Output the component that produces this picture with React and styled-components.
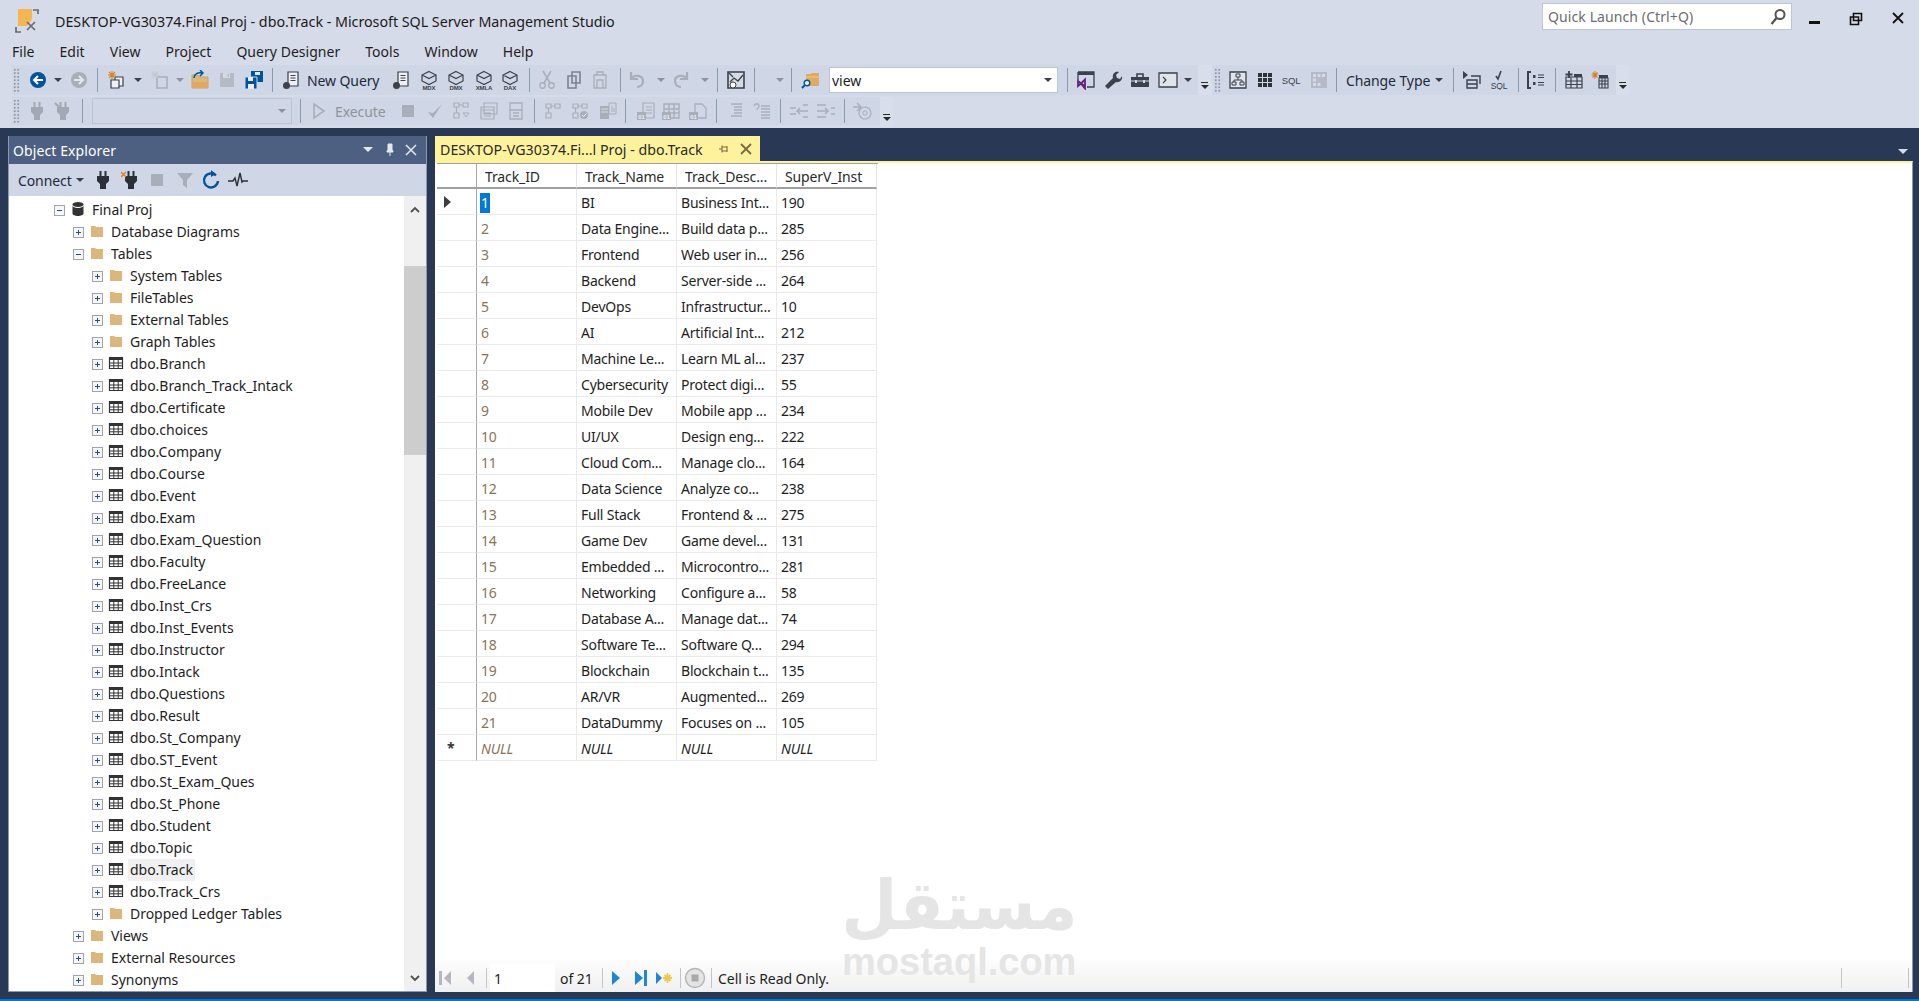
import React from 'react';
import styled, { createGlobalStyle } from 'styled-components';

const FONT = '"Noto Sans", "Open Sans", sans-serif';
const Global = createGlobalStyle`
  html, body { margin: 0; padding: 0; background: #293955; }
  * { box-sizing: border-box; }
  body { font-family: ${FONT}; }
`;

const Shell = styled.div`width:1919px;height:1001px;display:flex;flex-direction:column;overflow:hidden;background:#d6dbe9;font-family:${FONT};color:#1e1e1e;`;
const TitleBar = styled.div`height:38px;display:flex;align-items:flex-start;flex:none;`;
const AppIcon = styled.div`width:24px;height:26px;margin:8px 0 0 15px;flex:none;`;
const TitleText = styled.div`margin:12px 0 0 16px;font-size:14.3px;line-height:20px;letter-spacing:-.03px;color:#1b1b1b;white-space:nowrap;`;
const TitleSpacer = styled.div`flex:1;`;
const QuickLaunch = styled.div`width:250px;height:27px;margin-top:3px;background:#fff;border:1px solid #bcc5d8;display:flex;align-items:center;justify-content:space-between;padding:0 4px 0 5px;font-size:14px;letter-spacing:.1px;color:#6d6d6d;`;
const WinControls = styled.div`display:flex;width:127px;flex:none;padding-left:2px;`;
const WinBtn = styled.div`width:41.6px;height:38px;display:flex;align-items:center;justify-content:center;`;
const MenuBar = styled.div`height:27px;flex:none;display:flex;align-items:center;padding-left:12px;gap:25px;font-size:14px;letter-spacing:.03px;color:#1e1e1e;`;
const Band = styled.div`height:31px;flex:none;display:flex;align-items:flex-start;margin-bottom:${p=>p.$mb||0}px;`;
const Toolbar = styled.div`display:flex;align-items:center;height:${p=>p.$h||30}px;width:${p=>p.$w}px;margin-left:${p=>p.$ml||0}px;background:#cfd6e5;flex:none;`;
const Slot = styled.div`flex:none;width:${p=>p.$w}px;margin-left:${p=>p.$ml}px;height:24px;display:flex;align-items:center;justify-content:${p=>p.$left?'flex-start':'center'};font-size:14px;letter-spacing:-.1px;white-space:nowrap;color:${p=>p.$off?'#8e939c':'#1e2a3c'};`;
const Sep = styled.div`flex:none;width:1px;height:24px;margin-left:${p=>p.$ml}px;background:#8a9bad;`;
const Grip = styled.div`flex:none;width:7px;height:24px;margin-left:${p=>p.$ml}px;background-image:radial-gradient(#8f97a8 .8px,transparent 1px);background-size:3.5px 3.5px;`;
const Caret = styled.div`flex:none;margin-left:${p=>p.$ml}px;width:0;height:0;border-left:4px solid transparent;border-right:4px solid transparent;border-top:4px solid ${p=>p.$off?'#8e939c':'#3a3f4a'};`;
const Overflow = styled.div`flex:none;width:13px;height:30px;background:#d9deeb;display:flex;flex-direction:column;align-items:center;justify-content:flex-end;padding-bottom:6px;gap:2px;`;
const OverLine = styled.div`width:7px;height:1px;background:#2a2a2a;`;
const OverTri = styled.div`width:0;height:0;border-left:4px solid transparent;border-right:4px solid transparent;border-top:4px solid #2a2a2a;`;
const Combo = styled.div`flex:none;margin-left:${p=>p.$ml}px;width:${p=>p.$w}px;height:26px;background:${p=>p.$off?'#cfd6e5':'#fff'};border:1px solid ${p=>p.$off?'#bdc5d4':'#bcc5d8'};display:flex;align-items:center;justify-content:space-between;padding:0 5px 0 2px;font-size:14px;letter-spacing:0;`;

const Workspace = styled.div`flex:1;min-height:0;background:#293955;padding:8px 6px 7px 8px;display:flex;gap:8px;`;
const BottomLine = styled.div`height:2px;background:#007acc;flex:none;`;
const Explorer = styled.div`width:419px;flex:none;display:flex;flex-direction:column;background:#cfd6e5;border:1px solid #8b98ae;border-top:none;`;
const PanelTitle = styled.div`height:28px;flex:none;background:#4d6082;color:#fff;display:flex;align-items:center;padding-left:4px;font-size:14px;letter-spacing:.1px;`;
const PanelTools = styled.div`margin-left:auto;display:flex;align-items:center;padding-right:5px;`;
const PanelBtn = styled.div`width:${p=>p.$w||22}px;display:flex;align-items:center;justify-content:center;`;
const ExplorerBar = styled.div`height:32px;flex:none;display:flex;align-items:center;background:#cfd6e5;font-size:14px;`;
const TreeWrap = styled.div`flex:1;min-height:0;display:flex;background:#fff;overflow:hidden;`;
const TreeList = styled.div`flex:1;padding-top:3px;overflow:hidden;`;
const TreeRow = styled.div`height:22px;display:flex;align-items:center;padding-left:${p=>45+19*p.$d}px;font-size:14px;letter-spacing:-.03px;color:#1e1e1e;white-space:nowrap;`;
const Expander = styled.div`width:11px;height:11px;flex:none;border:1px solid #a0a4ac;background:#f6f6f6;position:relative;
  &::before{content:'';position:absolute;left:2px;right:2px;top:4px;height:1px;background:#2b4a86;}
  ${p=>p.$plus?`&::after{content:'';position:absolute;top:2px;bottom:2px;left:4px;width:1px;background:#2b4a86;}`:''}`;
const NodeIcon = styled.div`width:16px;height:16px;margin:-2px 6px 0 5px;flex:none;`;
const NodeLabel = styled.div`margin-left:-2px;padding:0 2px;line-height:22px;background:${p=>p.$sel?'#f0f0f0':'transparent'};`;
const ScrollTrack = styled.div`width:22px;flex:none;background:#f0f0f0;display:flex;flex-direction:column;align-items:center;`;
const ScrollArrow = styled.div`height:${p=>p.$h}px;flex:none;display:flex;align-items:center;justify-content:center;`;
const ScrollThumb = styled.div`width:22px;height:189px;flex:none;background:#cdcdcd;`;
const ScrollGap = styled.div`flex:1;`;

const Doc = styled.div`flex:1;min-width:0;display:flex;flex-direction:column;`;
const TabWell = styled.div`height:25px;flex:none;display:flex;align-items:flex-start;justify-content:space-between;`;
const Tab = styled.div`width:325px;height:25px;padding-top:1px;background:#fff29d;display:flex;align-items:center;padding-left:5px;font-size:14.2px;letter-spacing:.02px;color:#2a2a2a;white-space:nowrap;`;
const TabTools = styled.div`margin-left:auto;display:flex;align-items:center;`;
const WellCaret = styled.div`margin:13px 5px 0 0;width:0;height:0;border-left:5px solid transparent;border-right:5px solid transparent;border-top:5px solid #d6dbe9;`;
const DocBody = styled.div`flex:1;min-height:0;border-top:2px solid #fff29d;background:#fff;display:flex;flex-direction:column;position:relative;border-right:1px solid #8b98ae;`;
const GridArea = styled.div`flex:1;min-height:0;padding-left:2px;`;
const GridTable = styled.div`width:441px;display:grid;grid-template-columns:40px 100px 100px 100px 100px;border-top:1px solid #a0a0a0;`;
const HeadCell = styled.div`height:25px;padding-left:${p=>p.$corner?0:8}px;border-right:1px solid #e4e4e4;border-bottom:2px solid #a0a0a0;font-size:14px;letter-spacing:-.12px;line-height:25px;color:#2a2a2a;white-space:nowrap;overflow:hidden;${p=>p.$corner?'border-right:1px solid #a8a8a8;':''}`;
const RowHead = styled.div`height:26px;border-right:1px solid #a8a8a8;border-bottom:1px solid #eaeaea;display:flex;align-items:center;padding-left:${p=>p.$star?10:7}px;font-size:14px;font-weight:700;color:#333;`;
const Arrow = styled.div`width:0;height:0;border-top:6px solid transparent;border-bottom:6px solid transparent;border-left:7px solid #3c3c3c;`;
const Cell = styled.div`height:26px;padding-left:4px;border-right:1px solid #eaeaea;border-bottom:1px solid #eaeaea;font-size:14px;letter-spacing:-.22px;line-height:27px;white-space:nowrap;overflow:hidden;color:${p=>p.$ro?'#8a7458':'#1e1e1e'};font-style:${p=>p.$null?'italic':'normal'};`;
const Selected = styled.span`background:#0078d7;color:#fff;padding:0 1px;margin-left:-1px;display:inline-block;line-height:20px;`;
const NavBar = styled.div`height:32px;flex:none;display:flex;align-items:center;background:linear-gradient(#fdfdfd,#f0f0f0);font-size:14px;letter-spacing:-.05px;color:#1e1e1e;padding-top:4px;`;
const NavSlot = styled.div`flex:none;width:${p=>p.$w}px;margin-left:${p=>p.$ml}px;height:28px;display:flex;align-items:center;justify-content:${p=>p.$left?'flex-start':'center'};white-space:nowrap;background:${p=>p.$white?'#fff':'transparent'};padding-left:${p=>p.$white?4:0}px;`;
const NavSep = styled.div`flex:none;width:1px;height:${p=>p.$h||20}px;margin-left:${p=>p.$ml}px;background:#c4c4c4;`;
const Watermark = styled.div`position:absolute;left:407px;top:709px;width:234px;color:#e5e5e5;text-align:center;pointer-events:none;`;
const WmArabic = styled.div`font-family:"DejaVu Sans",sans-serif;font-weight:700;font-size:68px;line-height:68px;height:68px;white-space:nowrap;display:flex;justify-content:center;`;
const WmArabicText = styled.span`display:block;transform:scaleX(.95);`;
const WmLatin = styled.div`font-family:"Liberation Sans",sans-serif;font-weight:700;font-size:38px;line-height:44px;white-space:nowrap;`;

const S = ({ children, size = 20, vb = 20 }) => <svg width={size} height={size} viewBox={`0 0 ${vb} ${vb}`} style={{ display: 'block' }}>{children}</svg>;
const D = '#3b414d', G = '#a9afba', O = '#d9822b', B = '#00539c', F = '#dcb67a';
const cube = (t, c = D) => <S><path d="M10 1.500 17 5v6l-7 3.500L3 11V5z M3 5l7 3.500L17 5" fill="none" stroke={c} strokeWidth="1.200" /><text x="10" y="19.500" fontSize="6" fontWeight="700" textAnchor="middle" fill={c} fontFamily="Liberation Sans">{t}</text></S>;
const dbTiny = c => <ellipse cx="4.500" cy="15.500" rx="3.500" ry="3.500" fill={c} />;
const docLines = <path d="M6 2h10v14H6z M8.500 5.500h5 M8.500 8h5 M8.500 10.500h5" fill="#eef0f5" stroke={D} strokeWidth="1.200" />;
const plug = c => <path d="M6.500 1h2v5h3V1h2v5h2.500v5L13 14v5H7v-5L4 11V6h2.500z" fill={c} />;
const tiny01 = <><path d="M1 11h9v8H1z" fill={G} /><text x="5.500" y="17.500" fontSize="6" fontWeight="700" textAnchor="middle" fill="#eef0f5" fontFamily="Liberation Sans">01</text></>;

const icons = {
  back: <S><circle cx="10" cy="10" r="8" fill={B} /><path d="M15 10H7 M10 6l-4 4 4 4" fill="none" stroke="#fff" strokeWidth="2" /></S>,
  fwd: <S><circle cx="10" cy="10" r="8" fill={G} /><path d="M5 10h8 M10 6l4 4-4 4" fill="none" stroke="#e4e6ec" strokeWidth="2" /></S>,
  newp: <S><path d="M9 7h8v9H9z" fill="#eef0f5" stroke={D} strokeWidth="1.200" /><path d="M5 10h8v8H5z" fill="#eef0f5" stroke={D} strokeWidth="1.200" /><path d="M6 1v8 M2 5h8 M3 2l6 6 M9 2L3 8" stroke={O} strokeWidth="1.100" /></S>,
  newg: <S><path d="M8 7h10v11H8z" fill="none" stroke={G} strokeWidth="1.600" /><path d="M6 1v8 M2 5h8 M3 2l6 6 M9 2L3 8" stroke="#c5c9d2" strokeWidth="1.200" /></S>,
  open: <S><path d="M2 5h6l1 2h9v11H2z" fill={F} stroke="#c9a265" /><path d="M2 12h16v6H2z" fill="#e0a85e" /><path d="M4 8c0-4 4-6 8-5 M10 0l3 3-3 3" fill="none" stroke={B} strokeWidth="1.500" /></S>,
  save: <S><path d="M3 3h14v14H3z" fill="#b4bac6" /><path d="M6 3h7v5H6z" fill="#d5d9e2" /><path d="M10.500 4h1.500v3h-1.500z" fill="#b4bac6" /></S>,
  saveall: <S><path d="M7 1h12v11H7z" fill={B} /><path d="M1 7h12v12H1z" fill={B} stroke="#cfd6e5" /><path d="M4 7h5v4H4z M11 2h5v3h-5z M4 14h6v5H4z" fill="#e8ecf4" /></S>,
  nq: <S>{docLines}{dbTiny(D)}</S>,
  qdoc: <S>{docLines}{dbTiny(D)}</S>,
  mdx: cube('MDX'), dmx: cube('DMX'), xmla: cube('XMLA'), dax: cube('DAX'),
  cut: <S><path d="M6 1l7 12 M14 1L7 13" stroke={G} strokeWidth="1.500" /><circle cx="5.500" cy="15.500" r="2.700" fill="none" stroke={G} strokeWidth="1.400" /><circle cx="14.500" cy="15.500" r="2.700" fill="none" stroke={G} strokeWidth="1.400" /></S>,
  copy: <S><path d="M8 2h8v11H8z M4 6h8v12H4z" fill="#cfd6e5" stroke="#7d838e" strokeWidth="1.600" /></S>,
  paste: <S><path d="M4 5h12v13H4z M7 2h6v3H7z M7 10h6v8H7z" fill="none" stroke={G} strokeWidth="1.300" /></S>,
  undo: <S><path d="M4 2v7h7 M4 9c3-5 12-4 12 2 0 4-3 6-6 6" fill="none" stroke={G} strokeWidth="2.200" /></S>,
  redo: <S><path d="M16 2v7H9 M16 9c-3-5-12-4-12 2 0 4 3 6 6 6" fill="none" stroke={G} strokeWidth="2.200" /></S>,
  chart: <S><path d="M2 2h16v16H2z" fill="#d6dbe4" stroke={D} strokeWidth="1.600" /><path d="M3 3l4 4 M4 12l4-4 4 3 5-6" fill="none" stroke={D} strokeWidth="1.300" /><circle cx="7" cy="15" r="3" fill="#fff" stroke={D} /></S>,
  find: <S><path d="M5 4h5l1-1h7v13H5z" fill="#e0aa62" /><path d="M5 7h13" stroke="#f0c88c" /><circle cx="6" cy="13" r="2.800" fill="#eaf0fa" stroke={B} strokeWidth="1.400" /><path d="M4 15l-3 3" stroke={B} strokeWidth="2" /></S>,
  vs: <S><path d="M2 2h16v15h-7 M2 2v8" fill="none" stroke={D} strokeWidth="1.300" /><path d="M2 2h16v3H2z" fill={D} /><path d="M2 11l3 2.500L2 16z M5 13.500l4-4v9z M5 13.500 9 16" fill="none" stroke="#68217a" strokeWidth="1.800" /></S>,
  wrench: <S><path d="M2 16l8-8c-1-4 2-7 6-6l-3 3 1 3 3 1 2-3c1 4-3 7-6 6l-8 7z" fill={D} /></S>,
  box: <S><path d="M1 7h18v10H1z" fill={D} /><path d="M7 7V4h6v3" fill="none" stroke={D} strokeWidth="1.600" /><path d="M1 11h18" stroke="#cfd6e5" /><path d="M5 10h2v3H5z M13 10h2v3h-2z" fill="#cfd6e5" /></S>,
  term: <S><path d="M1 3h18v14H1z" fill="#dfe3ea" stroke={D} strokeWidth="1.300" /><path d="M5 7l3 3-3 3" fill="none" stroke={D} strokeWidth="1.200" /></S>,
  tree: <S><path d="M2 2h16v16H2z" fill="#dfe3ea" stroke={D} strokeWidth="1.300" /><path d="M8 4h4v3H8z M4 12h4v3H4z M12 12h4v3h-4z M10 7v3 M6 12v-2h8v2" fill="none" stroke={D} /></S>,
  nine: <S><path d="M3 3h4v4H3z M8 3h4v4H8z M13 3h4v4h-4z M3 8h4v4H3z M8 8h4v4H8z M13 8h4v4h-4z M3 13h4v4H3z M8 13h4v4H8z M13 13h4v4h-4z" fill="#2f333c" /></S>,
  sql: <S><text x="10" y="14" fontSize="9.500" textAnchor="middle" fill={D} fontFamily="Liberation Sans">SQL</text></S>,
  greyg: <S><path d="M2 2h16v16H2z" fill="#b4bac6" /><path d="M4 4h3v3H4z M8.500 4h3v3h-3z M13 4h3v3h-3z M4 8.500h3v3H4z M4 13h3v3H4z M8.500 13h3v3h-3z" fill="#d6dbe5" /></S>,
  runq: <S><path d="M1 1l5 4-5 4z" fill={D} /><path d="M5 10h10v8H5z M9 6h9v8 M5 14h10" fill="none" stroke={D} strokeWidth="1.400" /></S>,
  sqlc: <S><path d="M7 6l2 3 3-8" fill="none" stroke={D} strokeWidth="1.600" /><text x="10" y="18.500" fontSize="8.500" textAnchor="middle" fill={D} fontFamily="Liberation Sans">SQL</text></S>,
  brk: <S><path d="M5 2H2v16h3" fill="none" stroke={D} strokeWidth="2" /><path d="M7 5h2.500v3H7z M7 12h2.500v3H7z" fill={D} /><path d="M12 5h6 M12 7.500h6 M12 12.500h6 M12 15h6" stroke={D} strokeWidth="1.200" /></S>,
  addt: <S><path d="M2 7h16v11H2z M2 11h16 M2 14.500h16 M7 7v11 M13 7v11" fill="none" stroke={D} strokeWidth="1.200" /><path d="M5 1v7 M1.500 4.500h7" stroke={D} strokeWidth="1.800" /><path d="M10 4h8v3h-8z" fill={D} /></S>,
  newt: <S><path d="M9 8h9v10H9z M9 11h9 M9 14h9 M12 8v10 M15 8v10" fill="none" stroke={D} strokeWidth="1.100" /><path d="M9 5h9v3H9z" fill={D} /><path d="M5 1v8 M1.500 5h7 M2.500 2.500l5 5 M7.500 2.500l-5 5" stroke={O} strokeWidth="1.100" /></S>,
  gplug: <S>{plug('#a3a9b4')}</S>,
  gplugx: <S>{plug('#a3a9b4')}<path d="M2 2l6 6" stroke="#a3a9b4" strokeWidth="2" /></S>,
  play: <S><path d="M5 3l10 7-10 7z" fill="none" stroke={G} strokeWidth="1.600" /></S>,
  stop: <S><path d="M4 4h12v12H4z" fill={G} /></S>,
  check: <S><path d="M3 11l5 6L17 3l-9 9z" fill={G} /></S>,
  g1: <S><path d="M3 2h5v4H3z M12 2h5v4h-5z M3 12h5v5H3z M8 4h4 M5.500 6v6" fill="none" stroke={G} strokeWidth="1.200" /><path d="M12 12h6l-3 4z" fill="none" stroke={G} /></S>,
  g2: <S><path d="M5 2h13v11H5z M2 6h13v12H2z M2 9h13 M5 12h7 M5 15h7" fill="#cfd6e5" stroke={G} strokeWidth="1.200" /></S>,
  g3: <S><path d="M4 2h12v16H4z M4 9h12 M7 12h6 M7 15h6" fill="none" stroke={G} strokeWidth="1.300" /></S>,
  g4: <S><path d="M3 3h5v4H3z M12 3h5v4h-5z M3 12h5v5H3z M8 5h4 M5.500 7v5" fill="none" stroke={G} strokeWidth="1.200" /></S>,
  g5: <S><path d="M3 3h5v4H3z M12 3h5v4h-5z M3 12h5v5H3z M8 5h4 M5.500 7v5" fill="none" stroke={G} strokeWidth="1.200" /><circle cx="14" cy="14" r="4" fill={G} /><path d="M12 14l1.500 1.500 3-3" fill="none" stroke="#eef0f5" /></S>,
  g6: <S><path d="M3 5h9v13H3z" fill={G} /><path d="M4 8h7 M4 11h7" stroke="#d5dae4" /><path d="M12 2h7v11h-7z M15 5v6 M17 7v4" fill="none" stroke={G} /></S>,
  g7: <S><path d="M7 2h11v15H7z M10 6h6 M10 9h6 M10 12h6" fill="#cfd6e5" stroke={G} strokeWidth="1.200" />{tiny01}</S>,
  g8: <S><path d="M3 3h15v14H3z M3 8h15 M8 3v14 M13 3v14 M3 12h15" fill="none" stroke={G} strokeWidth="1.400" />{tiny01}</S>,
  g9: <S><path d="M7 3h7l4 4v10H7z" fill="none" stroke={G} strokeWidth="1.300" />{tiny01}</S>,
  g10: <S><path d="M5 3h11 M8 6h8 M8 9h8 M8 12h8 M5 15h11" stroke={G} strokeWidth="1.300" /></S>,
  g11: <S><path d="M9 5h9 M9 8h9 M9 11h9 M9 14h9 M9 17h9" stroke={G} strokeWidth="1.300" /><path d="M2 5c1-3 5-3 5 0 0 2-2 2-2 4" fill="none" stroke={G} strokeWidth="1.300" /></S>,
  g12: <S><path d="M1 7h6 M1 13h6 M14 4h5 M14 10h5 M14 16h5 M14 10H8 M11 7l-3 3 3 3" fill="none" stroke={G} strokeWidth="1.600" /></S>,
  g13: <S><path d="M1 4h9 M1 10h11 M1 16h9 M15 7h4 M15 13h4 M9 7l3 3-3 3" fill="none" stroke={G} strokeWidth="1.600" /></S>,
  g14: <S><path d="M1 6h7 M5 2l4 4-4 4" fill="none" stroke={G} strokeWidth="1.500" /><circle cx="13" cy="12" r="6" fill="none" stroke={G} strokeWidth="1.200" /><circle cx="13" cy="12" r="2.200" fill="none" stroke={G} /></S>,
  plug: <S>{plug('#2b2f38')}</S>,
  plugx: <S>{plug('#2b2f38')}<path d="M0 2l5 5 M5 2L0 7" stroke={O} strokeWidth="1.500" /></S>,
  filter: <S><path d="M2 3h16l-6 7v8l-4-3v-5z" fill={G} /></S>,
  refresh: <S><path d="M15 5.500A7 7 0 1 0 17 11" fill="none" stroke={B} strokeWidth="2.400" /><path d="M10 0v7l5-3z" fill={B} /></S>,
  activity: <S><path d="M0 11h5l2-3 2 8 3-13 2 9 1-1h5" fill="none" stroke="#2b2f38" strokeWidth="1.400" /></S>,
};

const flow = (items, x0) => {
  let e = x0;
  return items.map(it => {
    const w = it.w || (it.k === 'sep' ? 1 : it.k === 'caret' ? 8 : it.k === 'grip' ? 7 : 20);
    const left = it.t ? it.x : it.k === 'combo' ? it.x : it.x - w / 2;
    const ml = left - e;
    e = left + w;
    return { ...it, w, ml };
  });
};
const mk = (k, x) => ({ k, x });

const row1a = [mk('grip',16),mk('back',38),mk('caret',58),mk('fwd',79),mk('sep',97),mk('newp',116),mk('caret',137.5),mk('newg',159),{k:'caret',x:180,off:1},mk('open',200),mk('save',227),mk('saveall',254),mk('sep',272),mk('nq',292),{t:'New Query',x:307,w:76},mk('qdoc',402),mk('mdx',429),mk('dmx',456),mk('xmla',484),mk('dax',510),mk('sep',529),mk('cut',547),mk('copy',574),mk('paste',600),mk('sep',620),mk('undo',637),{k:'caret',x:661,off:1},mk('redo',681),{k:'caret',x:705,off:1},mk('sep',717.5),mk('chart',736),mk('sep',754),{k:'caret',x:780,off:1},mk('sep',791),mk('find',811),{k:'combo',x:829,w:229,v:'view'},mk('sep',1067),mk('vs',1086),mk('wrench',1113),mk('box',1140),mk('term',1168),mk('caret',1188)];
const row1b = [mk('grip',1217),mk('tree',1237.5),mk('nine',1264.5),mk('sql',1291),mk('greyg',1319),mk('sep',1336),{t:'Change Type',x:1346,w:86,on:1},mk('caret',1439),mk('sep',1453.5),mk('runq',1472),mk('sqlc',1499),mk('sep',1518),mk('brk',1536),mk('sep',1555),mk('addt',1574),mk('newt',1600)];
const row2 = [mk('grip',16),mk('gplug',37),mk('gplugx',63),mk('sep',82),{k:'combo',x:92,w:200,off:1,v:''},mk('sep',300),mk('play',319),{t:'Execute',x:335,w:52,off:1},mk('stop',408),mk('check',435),mk('g1',461),mk('g2',489),mk('g3',515.5),mk('sep',534),mk('g4',553),mk('g5',580),mk('g6',607),mk('sep',625),mk('g7',646),mk('g8',671),mk('g9',698),mk('sep',716),mk('g10',736),mk('g11',762),mk('sep',780),mk('g12',799),mk('g13',826),mk('sep',844.5),mk('g14',862)];

const renderBar = (items, x0) => flow(items, x0).map((it, i) => {
  if (it.k === 'grip') return <Grip key={i} $ml={it.ml} />;
  if (it.k === 'sep') return <Sep key={i} $ml={it.ml} />;
  if (it.k === 'caret') return <Caret key={i} $ml={it.ml} $off={it.off} />;
  if (it.k === 'combo') return <Combo key={i} $ml={it.ml} $w={it.w} $off={it.off}><span>{it.v}</span><Caret $ml={0} $off={it.off} /></Combo>;
  if (it.t) return <Slot key={i} $ml={it.ml} $w={it.w} $left $off={it.off}>{it.t}</Slot>;
  return <Slot key={i} $ml={it.ml} $w={it.w}>{icons[it.k]}</Slot>;
});

const OverflowBtn = () => <Overflow><OverLine /><OverTri /></Overflow>;

const folder = <S size={16} vb={16}><path d="M2 3h4l1 1h7v10H2z" fill={F} /></S>;
const tableIcon = <S size={16} vb={16}><path d="M1.500 2.500h13v11h-13z" fill="#fff" stroke="#333" strokeWidth="1.200" /><path d="M1.500 2.500h13v2.500h-13z" fill="#333" /><path d="M1.500 8h13 M1.500 10.800h13 M5.800 5v8 M10.200 5v8" stroke="#333" /></S>;
const dbIcon = <S size={16} vb={16}><ellipse cx="8" cy="3.500" rx="5.500" ry="2.500" fill="#333" /><path d="M2.500 4.500v8c0 3.300 11 3.300 11 0v-8c0 3.300-11 3.300-11 0z" fill="#333" /></S>;

const tables = ['Branch','Branch_Track_Intack','Certificate','choices','Company','Course','Event','Exam','Exam_Question','Faculty','FreeLance','Inst_Crs','Inst_Events','Instructor','Intack','Questions','Result','St_Company','ST_Event','St_Exam_Ques','St_Phone','Student','Topic','Track','Track_Crs'];
const tree = [
  { d: 0, i: dbIcon, l: 'Final Proj' },
  { d: 1, i: folder, l: 'Database Diagrams', p: 1 },
  { d: 1, i: folder, l: 'Tables' },
  ...['System Tables','FileTables','External Tables','Graph Tables'].map(l => ({ d: 2, i: folder, l, p: 1 })),
  ...tables.map(t => ({ d: 2, i: tableIcon, l: 'dbo.' + t, p: 1, sel: t === 'Track' })),
  { d: 2, i: folder, l: 'Dropped Ledger Tables', p: 1 },
  { d: 1, i: folder, l: 'Views', p: 1 },
  { d: 1, i: folder, l: 'External Resources', p: 1 },
  { d: 1, i: folder, l: 'Synonyms', p: 1 },
];

const rows = [
  ['BI','Business Int...','190'],['Data Engine...','Build data p...','285'],['Frontend','Web user in...','256'],['Backend','Server-side ...','264'],['DevOps','Infrastructur...','10'],['AI','Artificial Int...','212'],['Machine Le...','Learn ML al...','237'],['Cybersecurity','Protect digi...','55'],['Mobile Dev','Mobile app ...','234'],['UI/UX','Design eng...','222'],['Cloud Com...','Manage clo...','164'],['Data Science','Analyze co...','238'],['Full Stack','Frontend & ...','275'],['Game Dev','Game devel...','131'],['Embedded ...','Microcontro...','281'],['Networking','Configure a...','58'],['Database A...','Manage dat...','74'],['Software Te...','Software Q...','294'],['Blockchain','Blockchain t...','135'],['AR/VR','Augmented...','269'],['DataDummy','Focuses on ...','105'],
];

const Chevron = ({ up }) => <S size={12} vb={12}><path d={up ? 'M2 8l4-4 4 4' : 'M2 4l4 4 4-4'} fill="none" stroke="#505050" strokeWidth="1.800" /></S>;
const NavI = {
  first: <S size={18} vb={18}><path d="M2 2h3v14H2z M14 2v14L7 9z" fill="#b4b8be" /></S>,
  prev: <S size={18} vb={18}><path d="M12 2v14L5 9z" fill="#b4b8be" /></S>,
  next: <S size={18} vb={18}><path d="M5 2v14l8-7z" fill="#1f86d6" /></S>,
  last: <S size={18} vb={18}><path d="M3 2v14l8-7z M12 1h3v16h-3z" fill="#1f86d6" /></S>,
  neww: <S size={18} vb={18}><path d="M1 3v12l6-6z" fill="#1f86d6" /><path d="M12.500 4v10 M8 9h9 M9.500 6l6 6 M15.500 6l-6 6" stroke="#f2c84b" strokeWidth="1.800" /></S>,
  stop: <S size={22} vb={22}><circle cx="11" cy="11" r="9.500" fill="#e4e4e4" stroke="#b4b4b4" strokeWidth="1.400" /><path d="M7.500 7.500h7v7h-7z" fill="#a8a8a8" /></S>,
};

export default function App() {
  return (
    <Shell>
      <Global />
      <TitleBar>
        <AppIcon>
          <svg width="24" height="26" viewBox="0 0 24 26" style={{ display: 'block' }}>
            <path d="M3 1h14v10l-5 7H3z" fill="#f4b552" />
            <path d="M18 2h5v4 M6 24H1v-5 M12 22l8-8 M12 14l8 8" fill="none" stroke="#6b6b6b" strokeWidth="1.700" />
          </svg>
        </AppIcon>
        <TitleText>DESKTOP-VG30374.Final Proj - dbo.Track - Microsoft SQL Server Management Studio</TitleText>
        <TitleSpacer />
        <QuickLaunch>
          <span>Quick Launch (Ctrl+Q)</span>
          <S size={18} vb={18}><circle cx="11" cy="6.500" r="4.500" fill="none" stroke="#555" strokeWidth="2" /><path d="M7.500 10l-5 6" stroke="#555" strokeWidth="2.400" /></S>
        </QuickLaunch>
        <WinControls>
          <WinBtn><S size={14} vb={14}><path d="M1 9h11v3H1z" fill="#111" /></S></WinBtn>
          <WinBtn><S size={14} vb={14}><path d="M4.500 1.500h8v7h-8z M1.500 5h8v7.500h-8z" fill="#d6dbe9" stroke="#111" strokeWidth="1.600" /></S></WinBtn>
          <WinBtn><S size={14} vb={14}><path d="M2 1l10 10 M12 1L2 11" stroke="#111" strokeWidth="1.800" /></S></WinBtn>
        </WinControls>
      </TitleBar>
      <MenuBar>
        {['File','Edit','View','Project','Query Designer','Tools','Window','Help'].map(m => <span key={m}>{m}</span>)}
      </MenuBar>
      <Band $mb={1}>
        <Toolbar $ml={12} $w={1186}>{renderBar(row1a, 12)}</Toolbar>
        <OverflowBtn />
        <Toolbar $ml={2} $w={403}>{renderBar(row1b, 1213)}</Toolbar>
        <OverflowBtn />
      </Band>
      <Band>
        <Toolbar $ml={12} $w={868} $h={28}>{renderBar(row2, 12)}</Toolbar>
        <OverflowBtn />
      </Band>
      <Workspace>
        <Explorer>
          <PanelTitle>
            Object Explorer
            <PanelTools>
              <PanelBtn><S size={12} vb={12}><path d="M1 3h10L6 8z" fill="#e4e8f0" /></S></PanelBtn>
              <PanelBtn><S size={14} vb={14}><path d="M5 1h4v6l1 1v1H4V8l1-1z M7 9v4" fill="#e4e8f0" stroke="#e4e8f0" /></S></PanelBtn>
              <PanelBtn $w={20}><S size={14} vb={14}><path d="M2 2l10 10 M12 2L2 12" stroke="#e4e8f0" strokeWidth="1.500" /></S></PanelBtn>
            </PanelTools>
          </PanelTitle>
          <ExplorerBar>
            {flow([{t:'Connect',x:18,w:56},mk('caret',80),mk('plug',103),mk('plugx',130.500),mk('stop',157),mk('filter',184.500),mk('refresh',211),mk('activity',238)], 9).map((it, i) => it.t
              ? <Slot key={i} $ml={it.ml} $w={it.w} $left>{it.t}</Slot>
              : it.k === 'caret' ? <Caret key={i} $ml={it.ml} />
              : <Slot key={i} $ml={it.ml} $w={it.w}>{icons[it.k]}</Slot>)}
          </ExplorerBar>
          <TreeWrap>
            <TreeList>
              {tree.map(n => (
                <TreeRow key={n.l} $d={n.d}>
                  <Expander $plus={n.p} />
                  <NodeIcon>{n.i}</NodeIcon>
                  <NodeLabel $sel={n.sel}>{n.l}</NodeLabel>
                </TreeRow>
              ))}
            </TreeList>
            <ScrollTrack>
              <ScrollArrow $h={27}><Chevron up /></ScrollArrow>
              <ScrollArrow $h={43} />
              <ScrollThumb />
              <ScrollGap />
              <ScrollArrow $h={27}><Chevron /></ScrollArrow>
            </ScrollTrack>
          </TreeWrap>
        </Explorer>
        <Doc>
          <TabWell>
            <Tab>
              DESKTOP-VG30374.Fi...l Proj - dbo.Track
              <TabTools>
                <PanelBtn $w={16}><S size={12} vb={12}><path d="M1 6h3 M4 2.500v7 M4 4h5 M4 8h5 M9 3v6" fill="none" stroke="#7a6a40" strokeWidth="1.100" /></S></PanelBtn>
                <PanelBtn $w={28}><S size={14} vb={14}><path d="M2 2l10 10 M12 2L2 12" stroke="#7a6a40" strokeWidth="1.800" /></S></PanelBtn>
              </TabTools>
            </Tab>
            <WellCaret />
          </TabWell>
          <DocBody>
            <GridArea>
              <GridTable>
                <HeadCell $corner />
                {['Track_ID','Track_Name','Track_Desc...','SuperV_Inst'].map(h => <HeadCell key={h}>{h}</HeadCell>)}
                {rows.map((r, i) => (
                  <React.Fragment key={i}>
                    <RowHead>{i === 0 && <Arrow />}</RowHead>
                    <Cell $ro>{i === 0 ? <Selected>1</Selected> : i + 1}</Cell>
                    <Cell>{r[0]}</Cell>
                    <Cell>{r[1]}</Cell>
                    <Cell>{r[2]}</Cell>
                  </React.Fragment>
                ))}
                <RowHead $star>*</RowHead>
                <Cell $ro $null>NULL</Cell>
                <Cell $null>NULL</Cell>
                <Cell $null>NULL</Cell>
                <Cell $null>NULL</Cell>
              </GridTable>
            </GridArea>
            <NavBar>
              {flow([{k:'first',x:447,w:18},{k:'prev',x:472,w:18},{k:'sep',x:487},{t:'1',x:491,w:65,white:1},{t:'of 21',x:561,w:36},{k:'sep',x:603},{k:'next',x:617,w:18},{k:'last',x:642,w:18},{k:'neww',x:665,w:18},{k:'sep',x:681},{k:'stop',x:696,w:22},{k:'sep',x:712},{t:'Cell is Read Only.',x:719,w:120},{k:'sep',x:1842},{k:'sep',x:1909}], 436).map((it, i) => it.k === 'sep'
                ? <NavSep key={i} $ml={it.ml} />
                : it.t ? <NavSlot key={i} $ml={it.ml} $w={it.w} $left $white={it.white}>{it.t}</NavSlot>
                : <NavSlot key={i} $ml={it.ml} $w={it.w}>{NavI[it.k]}</NavSlot>)}
            </NavBar>
            <Watermark>
              <WmArabic lang="ar" dir="rtl"><WmArabicText>مستقل</WmArabicText></WmArabic>
              <WmLatin>mostaql.com</WmLatin>
            </Watermark>
          </DocBody>
        </Doc>
      </Workspace>
      <BottomLine />
    </Shell>
  );
}
